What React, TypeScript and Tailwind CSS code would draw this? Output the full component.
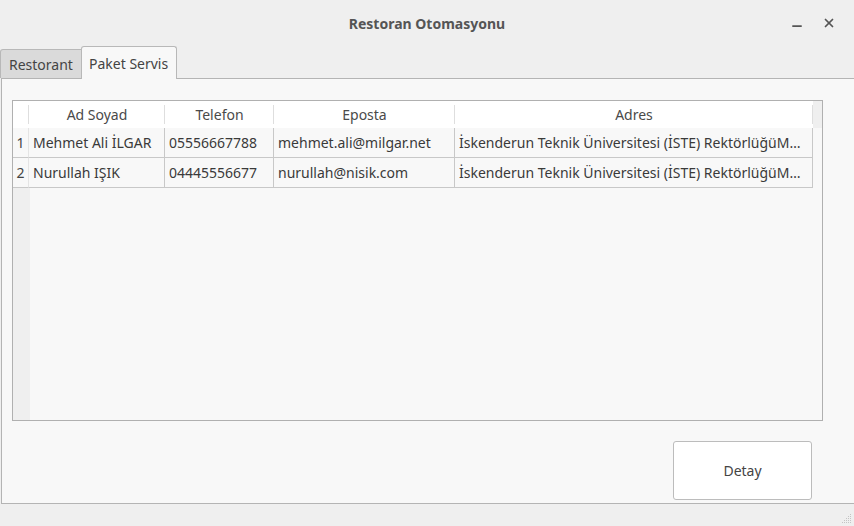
import { Minus, X } from 'lucide-react';

type Row = { id: number; name: string; phone: string; email: string; address: string };

const rows: Row[] = [
  {
    id: 1,
    name: 'Mehmet Ali İLGAR',
    phone: '05556667788',
    email: 'mehmet.ali@milgar.net',
    address: 'İskenderun Teknik Üniversitesi (İSTE) RektörlüğüM…',
  },
  {
    id: 2,
    name: 'Nurullah IŞIK',
    phone: '04445556677',
    email: 'nurullah@nisik.com',
    address: 'İskenderun Teknik Üniversitesi (İSTE) RektörlüğüM…',
  },
];

const cols = 'grid grid-cols-[16px_136px_109px_181px_358px_9px]';

function HeaderCell({ label }: { label: string }) {
  return (
    <div className="relative flex items-center justify-center text-[#4a4a4a]">
      {label}
      <span className="absolute right-0 top-[4px] bottom-[4px] w-px bg-[#dedede]" />
    </div>
  );
}

export default function App() {
  return (
    <div
      className="w-[854px] h-[526px] bg-[#efefef] flex flex-col text-[14px] text-[#3a3a3a]"
      style={{ fontFamily: '"Noto Sans", "Open Sans", sans-serif' }}
    >
      {/* title bar */}
      <div className="h-[46px] grid grid-cols-[1fr_auto_1fr] items-center">
        <div />
        <div className="text-[14px] font-bold text-[#555]">Restoran Otomasyonu</div>
        <div className="flex justify-end items-center gap-[18px] pr-[18px] text-[#555]">
          <Minus size={14} strokeWidth={3} className="mt-[6px]" />
          <X size={14} strokeWidth={3} />
        </div>
      </div>

      {/* tabs */}
      <div className="h-[32px] flex items-end">
        <div className="w-[82px] h-[29px] bg-[#dadada] border border-b-0 border-[#b8b8b8] rounded-tl-[3px] flex items-center pl-[8px] text-[#444]">
          Restorant
        </div>
        <div className="relative z-10 -mb-px -ml-px w-[96px] h-[33px] bg-[#f8f8f8] border border-b-0 border-[#b8b8b8] rounded-t-[3px] flex items-center pl-[7px] text-[#444]">
          Paket Servis
        </div>
      </div>

      {/* panel */}
      <div className="ml-px h-[426px] bg-[#f8f8f8] border-l border-t border-b border-[#b4b4b4] pl-[10px] pt-[21px] flex flex-col">
        <div className="w-[811px] h-[321px] border border-[#b0b0b0] flex flex-col overflow-hidden">
          <div className={`${cols} h-[27px] bg-white`}>
            <div className="relative">
              <span className="absolute right-0 top-[4px] bottom-[4px] w-px bg-[#dedede]" />
            </div>
            <HeaderCell label="Ad Soyad" />
            <HeaderCell label="Telefon" />
            <HeaderCell label="Eposta" />
            <HeaderCell label="Adres" />
            <div className="bg-[#efefef]" />
          </div>

          {rows.map((r) => (
            <div key={r.id} className={`${cols} h-[30px] bg-[#f8f8f8]`}>
              <div className="flex items-center justify-center border-b border-[#c8c8c8] border-r border-r-[#e4e4e4] text-[#444]">
                {r.id}
              </div>
              <div className="flex items-center px-[4px] border-b border-r border-[#c8c8c8] whitespace-nowrap overflow-hidden">
                {r.name}
              </div>
              <div className="flex items-center px-[4px] border-b border-r border-[#c8c8c8] whitespace-nowrap overflow-hidden">
                {r.phone}
              </div>
              <div className="flex items-center px-[4px] border-b border-r border-[#c8c8c8] whitespace-nowrap overflow-hidden">
                {r.email}
              </div>
              <div className="flex items-center px-[4px] border-b border-r border-[#c8c8c8] whitespace-nowrap overflow-hidden">
                <span className="truncate">{r.address}</span>
              </div>
              <div />
            </div>
          ))}

          <div className="flex-1 flex">
            <div className="w-[17px] bg-[#efefef]" />
            <div className="flex-1" />
          </div>
        </div>

        <div className="flex justify-end pr-[42px] pt-[20px]">
          <button className="w-[139px] h-[59px] bg-white border border-[#bcbcbc] rounded-[3px] text-[#444]">
            Detay
          </button>
        </div>
      </div>

      {/* status strip */}
      <div className="flex-1 flex justify-end items-end pr-[2px] pb-[2px]">
        <svg width="10" height="10" viewBox="0 0 10 10" fill="#c4c4c4">
          <rect x="8" y="0" width="1" height="1" />
          <rect x="6" y="2" width="1" height="1" />
          <rect x="8" y="2" width="1" height="1" />
          <rect x="4" y="4" width="1" height="1" />
          <rect x="6" y="4" width="1" height="1" />
          <rect x="8" y="4" width="1" height="1" />
          <rect x="2" y="6" width="1" height="1" />
          <rect x="4" y="6" width="1" height="1" />
          <rect x="6" y="6" width="1" height="1" />
          <rect x="8" y="6" width="1" height="1" />
          <rect x="0" y="8" width="1" height="1" />
          <rect x="2" y="8" width="1" height="1" />
          <rect x="4" y="8" width="1" height="1" />
          <rect x="6" y="8" width="1" height="1" />
          <rect x="8" y="8" width="1" height="1" />
        </svg>
      </div>
    </div>
  );
}
